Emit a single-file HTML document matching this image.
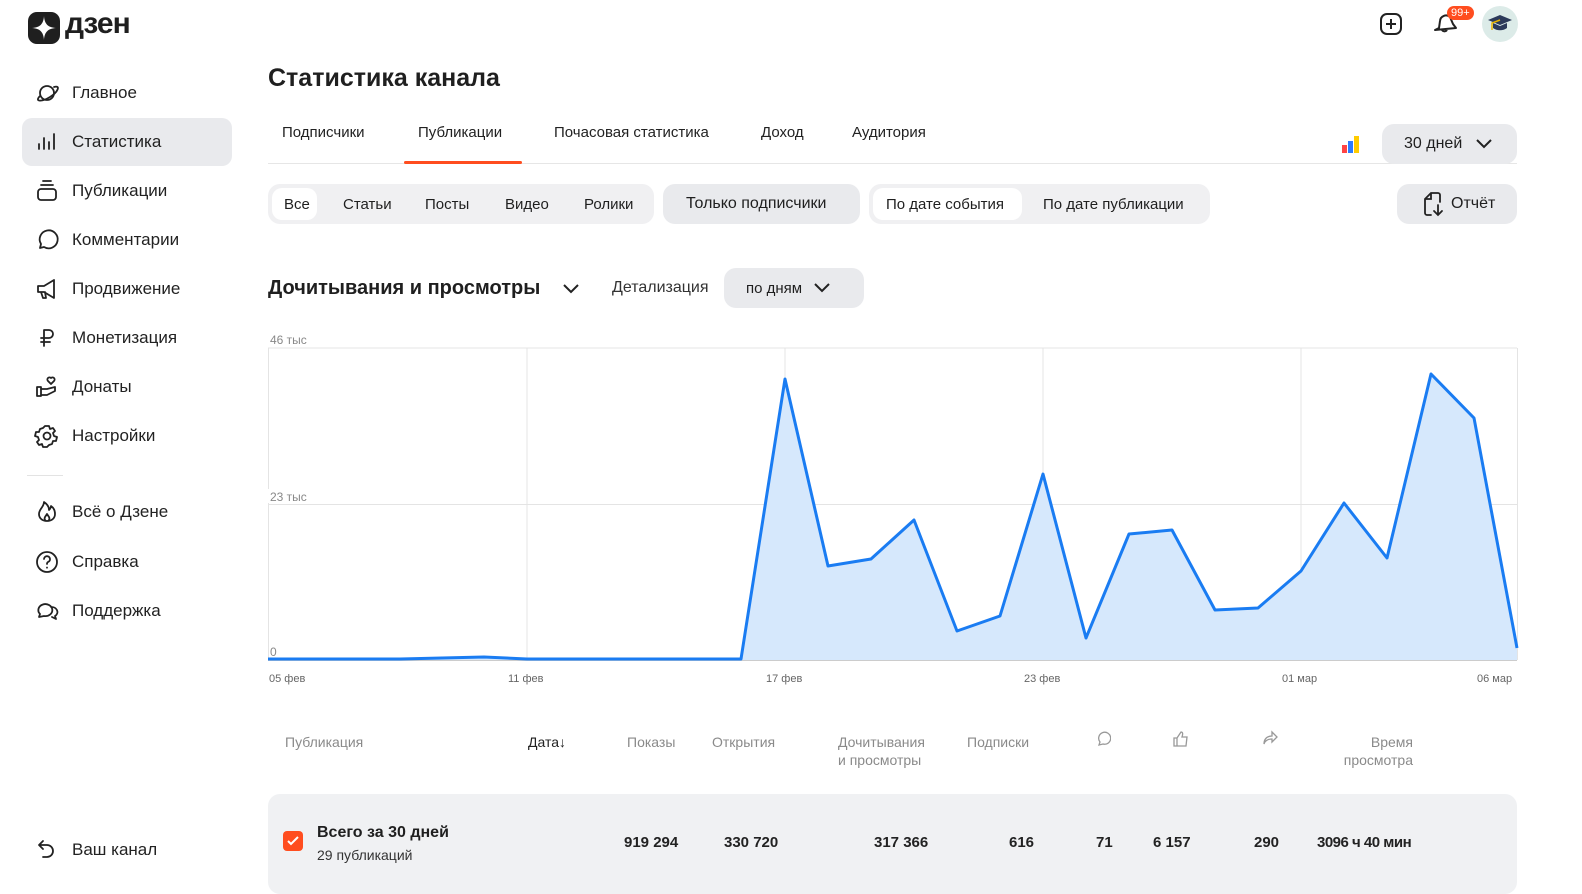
<!DOCTYPE html>
<html><head><meta charset="utf-8"><style>
*{box-sizing:border-box;margin:0;padding:0}
body{width:1582px;height:883px;overflow:hidden;background:#fff;font-family:"Liberation Sans","Noto Sans CJK SC",sans-serif;color:#1f1f1f;position:relative}
.a{position:absolute;white-space:nowrap}
.nav{position:absolute;left:22px;width:210px;height:48px;display:flex;align-items:center;font-size:17px;color:#222;border-radius:10px}
.nav svg{position:absolute;left:12px;width:26px;height:26px;fill:none;stroke:#222;stroke-width:1.8;stroke-linecap:round;stroke-linejoin:round}
.nav span{position:absolute;left:50px}
.tab{position:absolute;top:124px;font-size:15px;color:#222}
.pill{position:absolute;height:40px;border-radius:12px;background:#f0f0f2;font-size:15px;display:flex;align-items:center}
.th{position:absolute;font-size:14px;color:#8a8a8a;line-height:18px}
.num{position:absolute;top:834px;font-size:15px;font-weight:bold;color:#222}
</style></head><body>
<!-- logo -->
<svg class="a" style="left:28px;top:12px" width="34" height="32" viewBox="0 0 34 32"><rect width="32" height="32" rx="9" fill="#1f1f1f"/><path d="M16 4 C16.5 12 20 15.5 28 16 C20 16.5 16.5 20 16 28 C15.5 20 12 16.5 4 16 C12 15.5 15.5 12 16 4Z" fill="#fff"/></svg>
<div class="a" style="left:65px;top:7px;font-size:30px;font-weight:bold;letter-spacing:-1px">дзен</div>

<div class="nav" style="top:69px"><svg viewBox="0 0 26 26"><circle cx="13" cy="13" r="7"/><path d="M6 16 C0 22 8 22 16 17 C24 12 27 5 20 7"/></svg><span>Главное</span></div>
<div class="nav" style="top:118px;background:#e9eaed"><svg viewBox="0 0 26 26"><path d="M5 20v-5M10 20V9M15 20v-7M20 20V5"/></svg><span>Статистика</span></div>
<div class="nav" style="top:167px"><svg viewBox="0 0 26 26"><rect x="4" y="11" width="18" height="11" rx="3"/><path d="M7 7h12M9 3h8"/></svg><span>Публикации</span></div>
<div class="nav" style="top:216px"><svg viewBox="0 0 26 26"><path d="M6 21 L7 17 A9 9 0 1 1 10 20 Z"/></svg><span>Комментарии</span></div>
<div class="nav" style="top:265px"><svg viewBox="0 0 26 26"><path d="M4 10h6l10-6v18l-10-6H4z M7 16l2 6h3l-1-6"/></svg><span>Продвижение</span></div>
<div class="nav" style="top:314px"><svg viewBox="0 0 26 26"><path d="M10 21V5h5a4 4 0 0 1 0 8h-8M7 17h9"/></svg><span>Монетизация</span></div>
<div class="nav" style="top:363px"><svg viewBox="0 0 26 26"><path d="M3 13h4v9H3zM7 15h6l8-2v4l-8 4H7M17 10l-3-3a2 2 0 0 1 3-3 2 2 0 0 1 3 3z"/></svg><span>Донаты</span></div>
<div class="nav" style="top:412px"><svg viewBox="0 0 26 26"><circle cx="13" cy="13" r="3.5"/><path d="M11 3h4l1 3 3-1 2 3-2 2 1 3 3 1-1 4-3 0-1 3-3 1-2 2h-4l-1-3-3 1-2-3 2-2-1-3-3-1 1-4 3 0 1-3 3-1z"/></svg><span>Настройки</span></div>
<div class="a" style="left:27px;top:475px;width:36px;height:1px;background:#e3e3e3"></div>
<div class="nav" style="top:488px"><svg viewBox="0 0 26 26"><path d="M13 22c-5 0-8-3-8-7 0-5 5-7 5-12 3 2 5 5 5 8 1-1 2-2 2-4 3 2 4 5 4 8 0 4-3 7-8 7zM13 22c-2 0-3-2-2-4l2-3 2 3c1 2 0 4-2 4z"/></svg><span>Всё о Дзене</span></div>
<div class="nav" style="top:538px"><svg viewBox="0 0 26 26"><circle cx="13" cy="13" r="10"/><path d="M10 10a3 3 0 1 1 4 3c-1 .5-1 1-1 2M13 18.5v.2"/></svg><span>Справка</span></div>
<div class="nav" style="top:587px"><svg viewBox="0 0 26 26"><path d="M5 19l1-3a7 6 0 1 1 4 2z M17 9a6 5 0 0 1 4 9l1 3-4-2"/></svg><span>Поддержка</span></div>
<div class="nav" style="top:826px"><svg viewBox="0 0 26 26"><path d="M9 4L5 8l4 4M5 8h8a6 6 0 0 1 0 12h-4"/></svg><span>Ваш канал</span></div>

<!-- top right -->
<svg class="a" style="left:1379px;top:12px" width="24" height="24" viewBox="0 0 24 24" fill="none" stroke="#222" stroke-width="2"><rect x="2" y="2" width="20" height="20" rx="6"/><path d="M12 7v10M7 12h10"/></svg>
<svg class="a" style="left:1431px;top:10px" width="28" height="28" viewBox="0 0 28 28" fill="none" stroke="#222" stroke-width="2" stroke-linejoin="round"><path d="M4 20 L8 18 L9 11 A6 6 0 0 1 19 7 L22 14 L25 18 Z M11 20a3 3 0 0 0 5 0"/></svg>
<div class="a" style="left:1447px;top:6px;background:#ff4d1f;color:#fff;font-size:11px;padding:0 4px;border-radius:8px;line-height:14px">99+</div>
<div class="a" style="left:1482px;top:6px;width:36px;height:36px;border-radius:50%;background:#dcebe8"></div>
<svg class="a" style="left:1487px;top:12px" width="26" height="24" viewBox="0 0 26 24"><path d="M1 8 L13 3 L25 8 L13 13Z" fill="#2c3a5a"/><path d="M6 11v5c4 3 10 3 14 0v-5l-7 3z" fill="#2c3a5a"/><path d="M13 8 L5 11 V18" stroke="#e8b400" stroke-width="1.5" fill="none"/></svg>

<div class="a" style="left:268px;top:64px;font-size:25px;font-weight:bold">Статистика канала</div>
<div class="tab" style="left:282px">Подписчики</div>
<div class="tab" style="left:418px">Публикации</div>
<div class="tab" style="left:554px">Почасовая статистика</div>
<div class="tab" style="left:761px">Доход</div>
<div class="tab" style="left:852px">Аудитория</div>
<div class="a" style="left:268px;top:163px;width:1249px;height:1px;background:#e6e6e6"></div>
<div class="a" style="left:404px;top:161px;width:118px;height:3px;background:#ff4d1f;border-radius:2px"></div>
<svg class="a" style="left:1342px;top:135px" width="20" height="18"><rect x="0" y="10" width="5" height="8" fill="#f44"/><rect x="6" y="6" width="5" height="12" fill="#2b7bff"/><rect x="12" y="1" width="5" height="17" fill="#fc0"/></svg>
<div class="pill" style="left:1382px;top:124px;width:135px;background:#e9eaed;padding-left:22px;font-size:16px">30 дней<svg style="margin-left:14px" width="16" height="10" fill="none" stroke="#222" stroke-width="2"><path d="M1 1l7 7 7-7"/></svg></div>

<div class="pill" style="left:268px;top:184px;width:386px">
 <div style="position:absolute;left:4px;top:4px;width:45px;height:32px;background:#fff;border-radius:10px"></div>
 <span class="a" style="left:16px">Все</span><span class="a" style="left:75px">Статьи</span><span class="a" style="left:157px">Посты</span><span class="a" style="left:237px">Видео</span><span class="a" style="left:316px">Ролики</span></div>
<div class="pill" style="left:663px;top:184px;width:197px;background:#e9eaed;padding-left:23px;font-size:16px">Только подписчики</div>
<div class="pill" style="left:869px;top:184px;width:341px">
 <div style="position:absolute;left:4px;top:4px;width:149px;height:32px;background:#fff;border-radius:10px"></div>
 <span class="a" style="left:17px">По дате события</span><span class="a" style="left:174px">По дате публикации</span></div>
<div class="pill" style="left:1397px;top:184px;width:120px;background:#e9eaed;font-size:16px">
 <svg style="margin-left:26px" width="22" height="26" viewBox="0 0 22 26" fill="none" stroke="#222" stroke-width="1.8" stroke-linecap="round"><path d="M8 24H4a2 2 0 0 1-2-2V8l6-6h7a2 2 0 0 1 2 2v7M8 2v6H2M15 14v10M11 20l4 4 4-4"/></svg><span style="margin-left:6px">Отчёт</span></div>

<div class="a" style="left:268px;top:277px;font-size:20px;font-weight:bold">Дочитывания и просмотры</div>
<svg class="a" style="left:563px;top:284px" width="16" height="10" fill="none" stroke="#222" stroke-width="2"><path d="M1 1l7 7 7-7"/></svg>
<div class="a" style="left:612px;top:279px;font-size:16px;color:#333">Детализация</div>
<div class="pill" style="left:724px;top:268px;width:140px;background:#e9eaed;padding-left:22px;font-size:15px">по дням<svg style="margin-left:12px" width="16" height="10" fill="none" stroke="#222" stroke-width="2"><path d="M1 1l7 7 7-7"/></svg></div>

<svg class="a" style="left:0;top:0" width="1582" height="700">
 <g stroke="#e4e4e4" stroke-width="1">
  <line x1="268" y1="348" x2="1517" y2="348"/><line x1="268" y1="504.5" x2="1517" y2="504.5"/>
  <line x1="527" y1="348" x2="527" y2="660"/><line x1="785" y1="348" x2="785" y2="660"/><line x1="1043" y1="348" x2="1043" y2="660"/><line x1="1301" y1="348" x2="1301" y2="660"/>
  <line x1="268.5" y1="348" x2="268.5" y2="660"/><line x1="1517.5" y1="348" x2="1517.5" y2="660"/>
  <line x1="268" y1="660.5" x2="1517" y2="660.5" stroke="#ccc"/>
 </g>
 <path d="M268,659 L400,659 L484,657 L527,659 L741,659 L785,379 L828,566 L871,559 L914,520 L957,631 L1000,616 L1043,474 L1086,638 L1129,534 L1172,530 L1215,610 L1258,608 L1301,571 L1344,503 L1387,558 L1431,374 L1474,418 L1517,648 L1517,660 L268,660Z" fill="#d6e8fc"/>
 <path d="M268,659 L400,659 L484,657 L527,659 L741,659 L785,379 L828,566 L871,559 L914,520 L957,631 L1000,616 L1043,474 L1086,638 L1129,534 L1172,530 L1215,610 L1258,608 L1301,571 L1344,503 L1387,558 L1431,374 L1474,418 L1517,648" fill="none" stroke="#1a7cf2" stroke-width="3" stroke-linejoin="round"/>
 <g font-family="Liberation Sans" font-size="12" fill="#888">
  <rect x="268" y="332" width="46" height="14" fill="#fff"/><text x="270" y="344">46 тыс</text>
  <rect x="268" y="489" width="46" height="14" fill="#fff"/><text x="270" y="501">23 тыс</text>
  <text x="270" y="656">0</text>
 </g>
 <g font-family="Liberation Sans" font-size="11" fill="#666">
  <text x="269" y="682">05 фев</text><text x="508" y="682">11 фев</text><text x="766" y="682">17 фев</text><text x="1024" y="682">23 фев</text><text x="1282" y="682">01 мар</text><text x="1477" y="682">06 мар</text>
 </g>
</svg>

<div class="th" style="left:285px;top:733px">Публикация</div>
<div class="th" style="left:528px;top:733px;color:#222">Дата↓</div>
<div class="th" style="left:627px;top:733px">Показы</div>
<div class="th" style="left:712px;top:733px">Открытия</div>
<div class="th" style="left:838px;top:733px">Дочитывания<br>и просмотры</div>
<div class="th" style="left:967px;top:733px">Подписки</div>
<svg class="a" style="left:1095px;top:731px" width="16" height="16" fill="none" stroke="#999" stroke-width="1.3"><path d="M4 14l1-3a6 6 0 1 1 3 2z"/></svg>
<svg class="a" style="left:1172px;top:730px" width="18" height="18" fill="none" stroke="#999" stroke-width="1.3"><path d="M2 8h3v8H2zM5 8l4-6c2 0 2 2 1 5h5l-1 9H5"/></svg>
<svg class="a" style="left:1261px;top:730px" width="18" height="16" fill="none" stroke="#999" stroke-width="1.3"><path d="M11 2l5 5-5 5V9C6 9 4 11 3 14c0-5 3-8 8-8z"/></svg>
<div class="th" style="left:1340px;top:733px;text-align:right;width:73px">Время<br>просмотра</div>

<div class="a" style="left:268px;top:794px;width:1249px;height:100px;background:#f0f1f3;border-radius:12px"></div>
<div class="a" style="left:283px;top:831px;width:20px;height:20px;background:#ff4d1f;border-radius:4px"></div>
<svg class="a" style="left:287px;top:836px" width="12" height="10" fill="none" stroke="#fff" stroke-width="2"><path d="M1 5l3 3 7-7"/></svg>
<div class="a" style="left:317px;top:824px;font-size:16px;font-weight:bold">Всего за 30 дней</div>
<div class="a" style="left:317px;top:847px;font-size:14px;color:#333">29 публикаций</div>
<div class="num" style="left:624px">919 294</div>
<div class="num" style="left:724px">330 720</div>
<div class="num" style="left:874px">317 366</div>
<div class="num" style="left:1009px">616</div>
<div class="num" style="left:1096px">71</div>
<div class="num" style="left:1153px">6 157</div>
<div class="num" style="left:1254px">290</div>
<div class="num" style="left:1317px;letter-spacing:-0.5px">3096 ч 40 мин</div>
</body></html>
